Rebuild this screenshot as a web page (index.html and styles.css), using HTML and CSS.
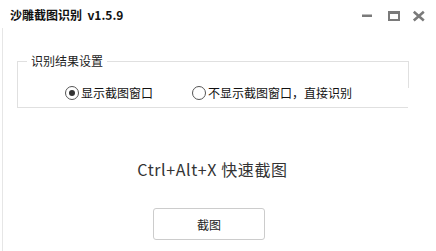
FILE: index.html
```html
<!DOCTYPE html>
<html lang="zh-CN">
<head>
<meta charset="utf-8">
<title>沙雕截图识别</title>
<link rel="stylesheet" href="styles.css">
</head>
<body>
<div class="window">
  <header class="titlebar">
    <span class="title">沙雕截图识别&nbsp;&nbsp;v1.5.9</span>
    <svg class="controls" width="80" height="28" viewBox="0 0 80 28" aria-hidden="true">
      <rect x="6" y="14.5" width="10" height="2.5" fill="#7a7a7a"/>
      <rect x="33" y="12" width="10" height="8" fill="none" stroke="#7a7a7a" stroke-width="2"/>
      <rect x="32" y="11" width="12" height="3" fill="#7a7a7a"/>
      <path d="M57.8 11.8 L67.8 20.4 M67.8 11.8 L57.8 20.4" stroke="#7a7a7a" stroke-width="2.6" fill="none"/>
    </svg>
  </header>
  <main class="content">
    <fieldset class="group">
      <legend class="legend">识别结果设置</legend>
      <div class="options">
        <label class="option">
          <span class="radio checked"></span>
          <span class="option-text">显示截图窗口</span>
        </label>
        <label class="option">
          <span class="radio"></span>
          <span class="option-text">不显示截图窗口，直接识别</span>
        </label>
      </div>
    </fieldset>
    <p class="hint">Ctrl+Alt+X 快速截图</p>
    <div class="actions">
      <button class="btn" type="button">截图</button>
    </div>
  </main>
</div>
</body>
</html>
```
FILE: styles.css
```css
html, body {
  margin: 0;
  padding: 0;
  background: #ffffff;
}

body {
  width: 436px;
  height: 251px;
  overflow: hidden;
  font-family: "Noto Sans CJK SC", "Noto Sans", sans-serif;
  color: #1a1a1a;
}

.window {
  display: flex;
  flex-direction: column;
  height: 251px;
}

.titlebar {
  display: flex;
  align-items: center;
  height: 28px;
  padding-left: 10px;
}

.title {
  font-size: 12px;
  font-weight: bold;
  line-height: 14px;
  color: #111;
  margin-top: 2px;
}

.controls {
  margin-left: auto;
  display: block;
}

.content {
  flex: 1;
  margin-left: 2px;
  border-left: 1px solid #e6e6e6;
  display: flex;
  flex-direction: column;
}

.group {
  position: relative;
  margin: 26px 0 0 14px;
  width: 390px;
  height: 52px;
  padding: 0;
  border: 1px solid #e0e0e0;
  box-sizing: content-box;
}

.group::after {
  content: "";
  position: absolute;
  right: -1px;
  top: 20px;
  width: 1px;
  height: 24px;
  background: #ffffff;
}

.legend {
  margin-left: 9px;
  padding: 0 4px;
  font-size: 12px;
  line-height: 14px;
  color: #222;
}

.options {
  display: flex;
  align-items: center;
  gap: 39px;
  padding: 18px 0 0 47px;
}

.option {
  display: flex;
  align-items: center;
  gap: 2px;
  font-size: 12px;
  line-height: 14px;
  color: #111;
}

.radio {
  position: relative;
  width: 14px;
  height: 14px;
  border: 1px solid #555;
  border-radius: 50%;
  box-sizing: border-box;
  flex: none;
}

.radio.checked::after {
  content: "";
  position: absolute;
  left: 3px;
  top: 3px;
  width: 6px;
  height: 6px;
  border-radius: 50%;
  background: #333;
}

.hint {
  margin: 52px 0 0 0;
  text-align: center;
  font-size: 16px;
  line-height: 18px;
  letter-spacing: 0.6px;
  color: #333;
  padding-right: 14px;
}

.actions {
  display: flex;
  justify-content: flex-start;
  padding-left: 150px;
  margin-top: 30px;
}

.btn {
  width: 112px;
  height: 32px;
  border: 1px solid #cccccc;
  border-radius: 3px;
  background: #ffffff;
  font-family: "Noto Sans CJK SC", sans-serif;
  font-size: 12px;
  color: #222;
  padding: 0;
}
```
